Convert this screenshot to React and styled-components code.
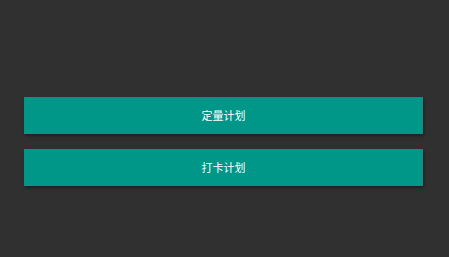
import React from "react";
import styled, { createGlobalStyle } from "styled-components";

const Global = createGlobalStyle`
  html, body { margin: 0; padding: 0; background: #303030; }
  body { font-family: "Noto Sans CJK SC", "Noto Sans", sans-serif; }
`;

const Page = styled.div`
  height: 257px;
  box-sizing: border-box;
  padding: 97px 26px 0 24px;
  display: flex;
  flex-direction: column;
  gap: 15px;
`;

const PlanButton = styled.button`
  height: 37px;
  width: 100%;
  border: none;
  border-radius: 0;
  background: #009688;
  color: #ffffff;
  font-family: "Noto Sans CJK SC", "Noto Sans", sans-serif;
  font-size: 11px;
  line-height: 1;
  box-shadow: 1px 2px 3px rgba(0, 0, 0, 0.35);
  display: flex;
  align-items: center;
  justify-content: center;
  padding: 0 0 1px 0;
  cursor: pointer;
`;

export default function App() {
  return (
    <>
      <Global />
      <Page>
        <PlanButton>定量计划</PlanButton>
        <PlanButton>打卡计划</PlanButton>
      </Page>
    </>
  );
}
